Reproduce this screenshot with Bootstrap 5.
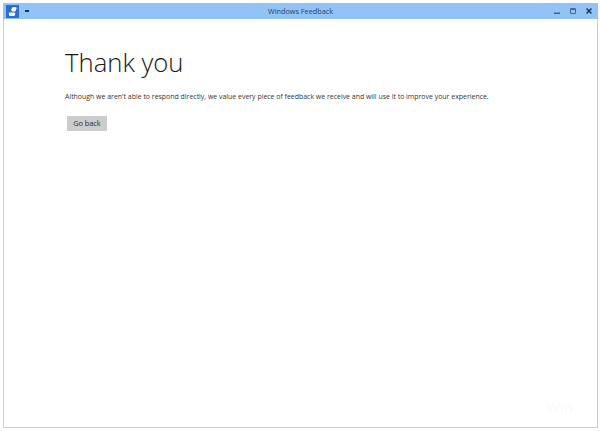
<!DOCTYPE html>
<html lang="en">
<head>
<meta charset="utf-8">
<title>Windows Feedback</title>
<link href="https://cdn.jsdelivr.net/npm/bootstrap@5.3.0/dist/css/bootstrap.min.css" rel="stylesheet">
<style>
html, body { height: 431px; overflow: hidden; background: #fff; }
body { padding: 3px 2px 3px 3px; font-family: "Open Sans", "Liberation Sans", sans-serif; color: #222; }
.app-window { height: 425px; border: 1px solid #c9ced3; border-top: 0; }
.title-strip { height: 16px; background: #92c3f6; margin: 0 -1px; color: #2a4260; font-size: 7.3px; padding: 0 6px 0 3px; }
.app-logo { width: 13px; height: 13px; background: #2a6fd0; }
.menu-dash { width: 4px; height: 1.5px; background: #20354f; margin-left: 6px; }
.title-text { left: 0; right: 0; top: 0; line-height: 16px; }
.ctrl-set { gap: 10px; }
.content-pane { padding: 26px 0 0 61px; }
.page-head { font-size: 25.7px; font-weight: 300; line-height: 36px; color: #1a1a1a; margin: 0 0 10px; }
.page-text { font-size: 6.95px; line-height: 12px; margin: 0 0 13px; color: #333; }
.back-btn { width: 40px; height: 15px; padding: 0; margin-left: 2px; border: 0; border-radius: 0; background: #cccccc; color: #2a2a2a; font-size: 7.3px; font-weight: 400; line-height: 15px; }
.faint-mark { right: 24px; bottom: 9px; font-size: 15px; color: #fafafa; }
</style>
</head>
<body>
<div class="app-window d-flex flex-column position-relative">
  <div class="title-strip d-flex align-items-center justify-content-between position-relative">
    <div class="d-flex align-items-center">
      <svg class="app-logo" viewBox="0 0 14 14" aria-hidden="true"><path fill="#fff" d="M7 2.500h4l.5 1-1.500 3.500H6.500L5.500 5.500z M3 8h6l1 .8-.8 3H3.500z"/></svg>
      <span class="menu-dash"></span>
    </div>
    <div class="title-text position-absolute text-center">Windows Feedback</div>
    <div class="ctrl-set d-flex align-items-center">
      <svg width="6" height="8" viewBox="0 0 6 8" aria-hidden="true"><rect x="0" y="5.500" width="6" height="1.500" fill="#3f6390"/></svg>
      <svg width="6" height="8" viewBox="0 0 6 8" aria-hidden="true"><path fill="none" stroke="#4a6a90" d="M.5 1.500h5v5h-5z"/><path stroke="#4a6a90" d="M0 2.500h6"/></svg>
      <svg width="6" height="8" viewBox="0 0 6 8" aria-hidden="true"><path stroke="#1c3350" stroke-width="1.500" d="M.5 1.500l5 5M5.500 1.500l-5 5"/></svg>
    </div>
  </div>
  <div class="content-pane flex-grow-1 position-relative">
    <h1 class="page-head">Thank you</h1>
    <p class="page-text">Although we aren't able to respond directly, we value every piece of feedback we receive and will use it to improve your experience.</p>
    <button type="button" class="btn back-btn d-block">Go back</button>
    <span class="faint-mark position-absolute">Win</span>
  </div>
</div>
<script src="https://cdn.jsdelivr.net/npm/bootstrap@5.3.0/dist/js/bootstrap.bundle.min.js"></script>
</body>
</html>
